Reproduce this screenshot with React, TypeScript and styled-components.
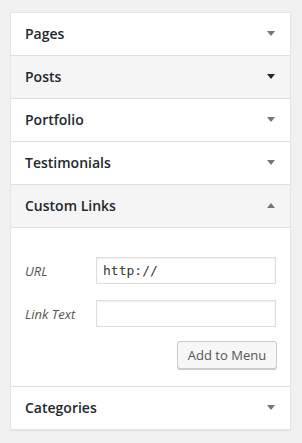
import React from "react";
import styled, { createGlobalStyle } from "styled-components";

const GlobalStyle = createGlobalStyle`
  body {
    margin: 0;
    background: #f1f1f1;
    font-family: "Open Sans", "Noto Sans", sans-serif;
  }
`;

const Page = styled.div`
  padding: 12px 10px;
`;

const Panel = styled.div`
  width: 281px;
  box-sizing: border-box;
  background: white;
  border: 1px solid #e5e5e5;
  box-shadow: 0 1px 1px rgba(0, 0, 0, 0.06);
`;

const Section = styled.div`
  border-bottom: 1px solid #dfdfdf;

  &:last-child {
    border-bottom: none;
  }
`;

const Header = styled.div<{ $active?: boolean }>`
  display: flex;
  align-items: center;
  justify-content: space-between;
  height: 42px;
  padding: 0 15px 1px 14px;
  box-sizing: border-box;
  background: ${(p) => (p.$active ? "#f5f5f5" : "white")};
`;

const Title = styled.span`
  font-size: 14px;
  font-weight: 600;
  color: #23282d;
`;

const Arrow = styled.span<{ $up?: boolean; $dark?: boolean }>`
  width: 0;
  height: 0;
  border-left: 4px solid transparent;
  border-right: 4px solid transparent;
  ${(p) =>
    p.$up
      ? `border-bottom: 5px solid ${p.$dark ? "#23282d" : "#72777c"};`
      : `border-top: 5px solid ${p.$dark ? "#23282d" : "#72777c"};`}
`;

const Body = styled.div`
  border-top: 1px solid #dfdfdf;
  padding: 29px 14px 17px 14px;
  display: flex;
  flex-direction: column;
  gap: 16px;
`;

const Field = styled.div`
  display: flex;
  align-items: center;
`;

const Label = styled.label`
  width: 71px;
  font-size: 13px;
  font-style: italic;
  color: #555;
`;

const Input = styled.input`
  width: 180px;
  height: 27px;
  box-sizing: border-box;
  border: 1px solid #ddd;
  box-shadow: inset 0 1px 2px rgba(0, 0, 0, 0.07);
  padding: 0 6px;
  font-family: "DejaVu Sans Mono", "Liberation Mono", monospace;
  font-size: 13px;
  color: #32373c;
  outline: none;
`;

const Actions = styled.div`
  display: flex;
  justify-content: flex-end;
  margin-right: -1px;
  margin-top: -2px;
`;

const Button = styled.button`
  width: 100px;
  height: 28px;
  box-sizing: border-box;
  border: 1px solid #ccc;
  border-radius: 3px;
  background: #f7f7f7;
  box-shadow: 0 1px 0 #ccc;
  font-family: "Open Sans", sans-serif;
  font-size: 13px;
  color: #555;
  padding: 0;
`;

const sections = [
  { title: "Pages" },
  { title: "Posts", hover: true },
  { title: "Portfolio" },
  { title: "Testimonials" },
  { title: "Custom Links", open: true },
  { title: "Categories" },
];

export default function App() {
  return (
    <Page>
      <GlobalStyle />
      <Panel>
        {sections.map((s) => (
          <Section key={s.title}>
            <Header $active={s.hover || s.open}>
              <Title>{s.title}</Title>
              <Arrow $up={s.open} $dark={s.hover} />
            </Header>
            {s.open && (
              <Body>
                <Field>
                  <Label>URL</Label>
                  <Input defaultValue="http://" />
                </Field>
                <Field>
                  <Label>Link Text</Label>
                  <Input />
                </Field>
                <Actions>
                  <Button>Add to Menu</Button>
                </Actions>
              </Body>
            )}
          </Section>
        ))}
      </Panel>
    </Page>
  );
}
